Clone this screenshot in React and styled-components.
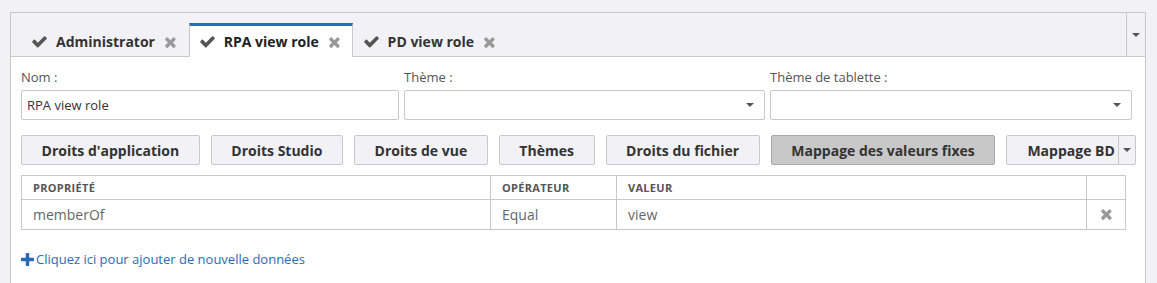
import styled, { createGlobalStyle } from 'styled-components';

const GlobalStyle = createGlobalStyle`
  body {
    margin: 0;
    background: #f2f2f6;
    font-family: "Open Sans", "Noto Sans", sans-serif;
    color: #333;
  }
`;

const Page = styled.div`
  padding: 12px 11px 0 10px;
  height: 283px;
  box-sizing: border-box;
  overflow: hidden;
`;

const Panel = styled.div`
  border: 1px solid #c8c8cc;
  border-bottom: none;
  background: #fff;
  height: 100%;
`;

const TabBar = styled.div`
  display: flex;
  align-items: flex-end;
  height: 44px;
  background: #f2f2f6;
  border-bottom: 1px solid #c8c8cc;
  padding-left: 10px;
  box-sizing: border-box;
`;

const Tab = styled.div`
  display: flex;
  align-items: center;
  height: ${(p) => (p.$active ? '34px' : '30px')};
  margin-bottom: ${(p) => (p.$active ? '-1px' : '0')};
  padding: 0 11px 0 9px;
  gap: 8px;
  font-size: 14px;
  font-weight: 700;
  color: ${(p) => (p.$active ? '#222' : '#333')};
  background: ${(p) => (p.$active ? '#fff' : 'transparent')};
  border: 1px solid ${(p) => (p.$active ? '#c8c8cc' : 'transparent')};
  border-top: ${(p) => (p.$active ? '3px solid #2a6bb8' : '1px solid transparent')};
  border-bottom: none;
  box-sizing: border-box;
`;

const TabLabel = styled.span`
  margin-right: 1px;
`;

const TabSpacer = styled.div`
  flex: 1;
`;

const TabMenu = styled.div`
  width: 18px;
  height: 100%;
  border-left: 1px solid #c8c8cc;
  display: flex;
  align-items: center;
  justify-content: center;
`;

const Content = styled.div`
  padding: 10px 10px 0 10px;
`;

const FormGrid = styled.div`
  display: grid;
  grid-template-columns: 378px 361px 362px;
  column-gap: 5px;
`;

const Field = styled.div`
  display: flex;
  flex-direction: column;
`;

const Label = styled.label`
  font-size: 13px;
  line-height: 20px;
  color: #555;
  margin-bottom: 3px;
`;

const Input = styled.div`
  height: 30px;
  border: 1px solid #c8c8cc;
  border-radius: 2px;
  box-sizing: border-box;
  display: flex;
  align-items: center;
  justify-content: space-between;
  padding: 0 10px 0 5px;
  font-size: 13px;
  color: #333;
`;

const ButtonRow = styled.div`
  display: flex;
  gap: 11px;
  margin-top: 15px;
  white-space: nowrap;
`;

const Button = styled.div`
  height: 30px;
  box-sizing: border-box;
  display: flex;
  align-items: center;
  padding: 0 19.6px;
  font-size: 14px;
  font-weight: 700;
  color: #333;
  background: ${(p) => (p.$active ? '#c8c8c8' : '#f2f2f6')};
  border: 1px solid ${(p) => (p.$active ? '#a9a9ab' : '#c8c8cc')};
  border-radius: 2px;
`;

const SplitButton = styled.div`
  display: flex;
  height: 30px;
  box-sizing: border-box;
  background: #f2f2f6;
  border: 1px solid #c8c8cc;
  border-radius: 2px;
  font-size: 14px;
  font-weight: 700;
  color: #333;
`;

const SplitMain = styled.div`
  display: flex;
  align-items: center;
  padding: 0 3px 0 20px;
`;

const SplitCaret = styled.div`
  width: 16px;
  border-left: 1px solid #c8c8cc;
  display: flex;
  align-items: center;
  justify-content: center;
`;

const Table = styled.table`
  margin-top: 10px;
  border-collapse: collapse;
  width: 1104px;
  table-layout: fixed;
`;

const Th = styled.th`
  height: 23px;
  padding: 0 11px;
  border: 1px solid #c8c8cc;
  text-align: left;
  font-size: 11px;
  font-weight: 700;
  color: #555;
  text-transform: uppercase;
  letter-spacing: 0.3px;
`;

const Td = styled.td`
  height: 29px;
  padding: 0 11px;
  border: 1px solid #c8c8cc;
  font-size: 14px;
  color: #666;
  text-align: ${(p) => (p.$center ? 'center' : 'left')};
  line-height: 1;
`;

const AddLink = styled.a`
  display: inline-flex;
  align-items: center;
  gap: 2px;
  margin-top: 20px;
  font-size: 13px;
  line-height: 18px;
  color: #2a6bb8;
  text-decoration: none;
`;

const IconSvg = styled.svg`
  display: block;
  flex-shrink: 0;
`;

const CheckIcon = () => (
  <IconSvg width="17" height="17" viewBox="0 0 1792 1792">
    <path
      fill="#555"
      d="M1671 566q0 40-28 68l-724 724-136 136q-28 28-68 28t-68-28l-136-136-362-362q-28-28-28-68t28-68l136-136q28-28 68-28t68 28l294 295 656-657q28-28 68-28t68 28l136 136q28 28 28 68z"
    />
  </IconSvg>
);

const TimesIcon = ({ size = 16 }) => (
  <IconSvg width={size * 0.8} height={size} viewBox="0 0 1408 1792" style={{ display: 'inline-block' }}>
    <path
      fill="#999"
      d="M1298 1322q0 40-28 68l-136 136q-28 28-68 28t-68-28l-294-294-294 294q-28 28-68 28t-68-28l-136-136q-28-28-28-68t28-68l294-294-294-294q-28-28-28-68t28-68l136-136q28-28 68-28t68 28l294 294 294-294q28-28 68-28t68 28l136 136q28 28 28 68t-28 68l-294 294 294 294q28 28 28 68z"
    />
  </IconSvg>
);

const PlusIcon = () => (
  <IconSvg width="13" height="17" viewBox="0 0 1408 1792">
    <path
      fill="#2a6bb8"
      d="M1408 800v192q0 40-28 68t-68 28h-416v416q0 40-28 68t-68 28h-192q-40 0-68-28t-28-68v-416h-416q-40 0-68-28t-28-68v-192q0-40 28-68t68-28h416v-416q0-40 28-68t68-28h192q40 0 68 28t28 68v416h416q40 0 68 28t28 68z"
    />
  </IconSvg>
);

const Caret = () => (
  <IconSvg width="8" height="4" viewBox="0 0 8 4">
    <path fill="#555" d="M0 0h8L4 4z" />
  </IconSvg>
);

const tabs = [
  { label: 'Administrator' },
  { label: 'RPA view role', active: true },
  { label: 'PD view role' },
];

const buttons = [
  'Droits d\'application',
  'Droits Studio',
  'Droits de vue',
  'Thèmes',
  'Droits du fichier',
];

export default function App() {
  return (
    <>
      <GlobalStyle />
      <Page>
        <Panel>
          <TabBar>
            {tabs.map((t) => (
              <Tab key={t.label} $active={t.active}>
                <CheckIcon />
                <TabLabel>{t.label}</TabLabel>
                <TimesIcon size={16} />
              </Tab>
            ))}
            <TabSpacer />
            <TabMenu>
              <Caret />
            </TabMenu>
          </TabBar>
          <Content>
            <FormGrid>
              <Field>
                <Label>Nom :</Label>
                <Input>RPA view role</Input>
              </Field>
              <Field>
                <Label>Thème :</Label>
                <Input>
                  <span />
                  <Caret />
                </Input>
              </Field>
              <Field>
                <Label>Thème de tablette :</Label>
                <Input>
                  <span />
                  <Caret />
                </Input>
              </Field>
            </FormGrid>
            <ButtonRow>
              {buttons.map((b) => (
                <Button key={b}>{b}</Button>
              ))}
              <Button $active>Mappage des valeurs fixes</Button>
              <SplitButton>
                <SplitMain>Mappage BD</SplitMain>
                <SplitCaret>
                  <Caret />
                </SplitCaret>
              </SplitButton>
            </ButtonRow>
            <Table>
              <colgroup>
                <col style={{ width: 469 }} />
                <col style={{ width: 126 }} />
                <col style={{ width: 470 }} />
                <col style={{ width: 39 }} />
              </colgroup>
              <thead>
                <tr>
                  <Th>Propriété</Th>
                  <Th>Opérateur</Th>
                  <Th>Valeur</Th>
                  <Th />
                </tr>
              </thead>
              <tbody>
                <tr>
                  <Td>memberOf</Td>
                  <Td>Equal</Td>
                  <Td>view</Td>
                  <Td $center>
                    <TimesIcon size={16} />
                  </Td>
                </tr>
              </tbody>
            </Table>
            <AddLink href="#">
              <PlusIcon />
              Cliquez ici pour ajouter de nouvelle données
            </AddLink>
          </Content>
        </Panel>
      </Page>
    </>
  );
}
